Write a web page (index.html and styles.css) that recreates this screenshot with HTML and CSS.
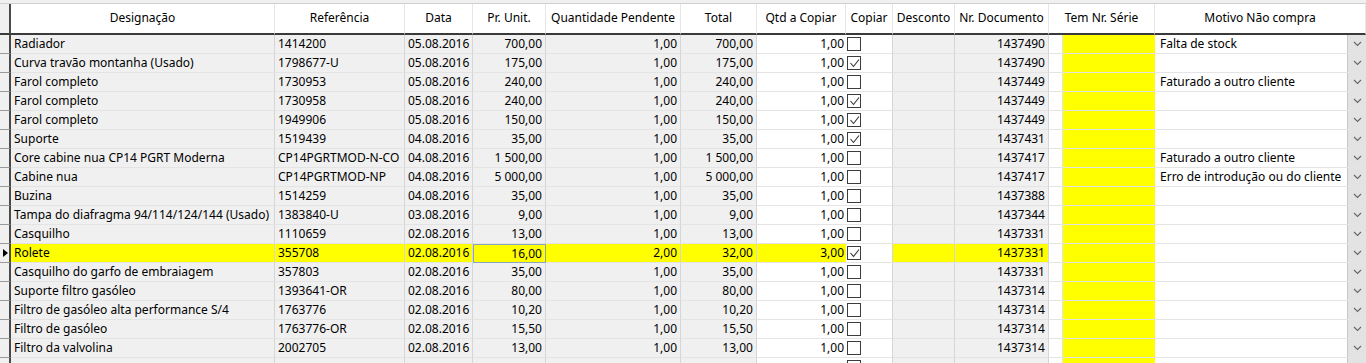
FILE: index.html
```html
<!DOCTYPE html>
<html lang="pt">
<head>
  <meta charset="UTF-8">
  <title>Linhas de Encomenda</title>
  <link rel="stylesheet" href="styles.css">
</head>
<body>

  <div class="grid">
    <div class="row head">
      <div class="ind"></div>
      <div>Designação</div>
      <div>Referência</div>
      <div>Data</div>
      <div>Pr. Unit.</div>
      <div>Quantidade Pendente</div>
      <div>Total</div>
      <div>Qtd a Copiar</div>
      <div>Copiar</div>
      <div>Desconto</div>
      <div>Nr. Documento</div>
      <div>Tem Nr. Série</div>
      <div>Motivo Não compra</div>
    </div>
    <div id="body"></div>
  </div>

  <script>
    const lines = [
      ['Radiador', '1414200', '05.08.2016', '700,00', '1,00', '700,00', '1,00', 0, '1437490', 'Falta de stock'],
      ['Curva travão montanha (Usado)', '1798677-U', '05.08.2016', '175,00', '1,00', '175,00', '1,00', 1, '1437490', ''],
      ['Farol completo', '1730953', '05.08.2016', '240,00', '1,00', '240,00', '1,00', 0, '1437449', 'Faturado a outro cliente'],
      ['Farol completo', '1730958', '05.08.2016', '240,00', '1,00', '240,00', '1,00', 1, '1437449', ''],
      ['Farol completo', '1949906', '05.08.2016', '150,00', '1,00', '150,00', '1,00', 1, '1437449', ''],
      ['Suporte', '1519439', '04.08.2016', '35,00', '1,00', '35,00', '1,00', 1, '1437431', ''],
      ['Core cabine nua CP14 PGRT Moderna', 'CP14PGRTMOD-N-CO', '04.08.2016', '1 500,00', '1,00', '1 500,00', '1,00', 0, '1437417', 'Faturado a outro cliente'],
      ['Cabine nua', 'CP14PGRTMOD-NP', '04.08.2016', '5 000,00', '1,00', '5 000,00', '1,00', 0, '1437417', 'Erro de introdução ou do cliente'],
      ['Buzina', '1514259', '04.08.2016', '35,00', '1,00', '35,00', '1,00', 0, '1437388', ''],
      ['Tampa do diafragma 94/114/124/144 (Usado)', '1383840-U', '03.08.2016', '9,00', '1,00', '9,00', '1,00', 0, '1437344', ''],
      ['Casquilho', '1110659', '02.08.2016', '13,00', '1,00', '13,00', '1,00', 0, '1437331', ''],
      ['Rolete', '355708', '02.08.2016', '16,00', '2,00', '32,00', '3,00', 1, '1437331', ''],
      ['Casquilho do garfo de embraiagem', '357803', '02.08.2016', '35,00', '1,00', '35,00', '1,00', 0, '1437331', ''],
      ['Suporte filtro gasóleo', '1393641-OR', '02.08.2016', '80,00', '1,00', '80,00', '1,00', 0, '1437314', ''],
      ['Filtro de gasóleo alta performance S/4', '1763776', '02.08.2016', '10,20', '1,00', '10,20', '1,00', 0, '1437314', ''],
      ['Filtro de gasóleo', '1763776-OR', '02.08.2016', '15,50', '1,00', '15,50', '1,00', 0, '1437314', ''],
      ['Filtro da valvolina', '2002705', '02.08.2016', '13,00', '1,00', '13,00', '1,00', 0, '1437314', ''],
      ['', '', '', '', '', '', '', 0, '', '']
    ];
    const current = 11;

    const tick = '<svg width="11" height="11" viewBox="0 0 11 11"><polyline points="1.5,5 4.5,8.5 10,1.5" fill="none" stroke="#333" stroke-width="1.1"/></svg>';
    const chevron = '<svg width="9" height="6" viewBox="0 0 9 6"><polyline points="1,1 4.5,4.5 8,1" fill="none" stroke="#666" stroke-width="1.1"/></svg>';

    const body = document.getElementById('body');
    lines.forEach((l, i) => {
      const row = document.createElement('div');
      row.className = 'row' + (i === current ? ' sel' : '');
      row.innerHTML = `
        <div class="ind">${i === current ? '<span class="arrow"></span>' : ''}</div>
        <div class="ro">${l[0]}</div>
        <div class="ro">${l[1]}</div>
        <div class="ro">${l[2]}</div>
        <div class="ro num${i === current ? ' focus' : ''}">${l[3]}</div>
        <div class="ro num">${l[4]}</div>
        <div class="ro num">${l[5]}</div>
        <div class="ed num qty">${l[6]}</div>
        <div class="chk"><span class="box">${l[7] ? tick : ''}</span></div>
        <div class="ro"></div>
        <div class="ro num">${l[8]}</div>
        <div class="serie"><span class="mini"></span><span class="fill"></span></div>
        <div class="motivo"><span class="txt">${l[9]}</span><span class="drop">${chevron}</span></div>`;
      body.appendChild(row);
    });
  </script>
</body>
</html>
```

FILE: styles.css
```css
html, body {
  margin: 0;
  height: 363px;
  overflow: hidden;
  background: #f0f0f0;
  font-family: 'Noto Sans', 'Open Sans', sans-serif;
  font-size: 12px;
  color: #000;
}
.grid {
  padding-top: 3px;
  width: 1366px;
}
.row {
  display: grid;
  grid-template-columns: 11px 264px 130px 68px 73px 135px 76px 89px 47px 62px 94px 106px 211px;
}
.row > div {
  box-sizing: border-box;
  height: 19px;
  line-height: 18px;
  padding: 0 3px;
  white-space: nowrap;
  overflow: hidden;
  border-bottom: 1px solid #e4e4e4;
  border-right: 1px solid #d6d6d6;
}
.head {
  border-top: 1px solid #d0d0d0;
}
.head > div {
  height: 31px;
  line-height: 28px;
  text-align: center;
  background: #fff;
  border-right: 1px solid #e6e6e6;
  border-bottom: 2px solid #3a3a3a;
}
.row > .ind {
  position: relative;
  padding: 0;
  background: #f0f0f0;
  border-right: 2px solid #4a4a4a;
  border-bottom: 1px solid #9a9a9a;
}
.head > .ind {
  border-bottom: 2px solid #3a3a3a;
}
.arrow {
  position: absolute;
  left: 3px;
  top: 5px;
  border-left: 5px solid #000;
  border-top: 4px solid transparent;
  border-bottom: 4px solid transparent;
}
.ro {
  background: #f0f0f0;
}
.ed {
  background: #fff;
}
.num {
  text-align: right;
}
.row > .qty {
  border-right: none;
  padding-right: 2px;
}
.row > .chk {
  background: #fff;
  padding: 2px 0 0 1px;
}
.box {
  display: flex;
  align-items: center;
  justify-content: center;
  box-sizing: border-box;
  width: 14px;
  height: 14px;
  border: 1px solid #3c3c3c;
  background: #fff;
}
.row > .serie {
  display: flex;
  padding: 0;
  border-right: none;
  background: #fff;
}
.mini {
  width: 13px;
  background: #fff;
  border-right: 1px solid #e4e4e4;
}
.fill {
  flex: 1;
  background: #ffff00;
}
.row > .motivo {
  display: flex;
  padding: 0 0 0 5px;
  background: #fff;
  border-right: none;
}
.txt {
  flex: 1;
  overflow: hidden;
}
.drop {
  display: flex;
  align-items: center;
  justify-content: center;
  width: 18px;
  background: #e3e3e3;
  border-left: 1px solid #c8c8c8;
}
.sel > .ro,
.sel > .qty {
  background: #ffff00;
}
.sel > .focus {
  border: 1px solid #8aa4c0;
}
```
